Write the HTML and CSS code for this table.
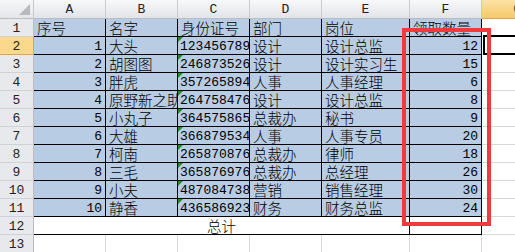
FILE: index.html
```html
<!DOCTYPE html>
<html lang="zh">
<head>
<meta charset="utf-8">
<title>Sheet</title>
<link rel="stylesheet" href="styles.css">
</head>
<body>
<div class="sheet">
  <div class="corner"></div>
  <div class="ch">A</div><div class="ch">B</div><div class="ch">C</div><div class="ch">D</div><div class="ch">E</div><div class="ch">F</div><div class="ch sel">G</div><div class="ch">H</div>

  <div class="rh">1</div>
  <div class="d">序号</div><div class="d">名字</div><div class="d">身份证号</div><div class="d">部门</div><div class="d">岗位</div><div class="d">领取数量</div><div class="c"></div><div class="c"></div>

  <div class="rh sel">2</div>
  <div class="d n">1</div><div class="d">大头</div><div class="d id">123456789012345678</div><div class="d">设计</div><div class="d">设计总监</div><div class="d n">12</div><div class="c cur"></div><div class="c"></div>

  <div class="rh">3</div>
  <div class="d n">2</div><div class="d">胡图图</div><div class="d id">246873526198712034</div><div class="d">设计</div><div class="d">设计实习生</div><div class="d n">15</div><div class="c"></div><div class="c"></div>

  <div class="rh">4</div>
  <div class="d n">3</div><div class="d">胖虎</div><div class="d id">357265894199203157</div><div class="d">人事</div><div class="d">人事经理</div><div class="d n">6</div><div class="c"></div><div class="c"></div>

  <div class="rh">5</div>
  <div class="d n">4</div><div class="d">原野新之助</div><div class="d id">264758476199506238</div><div class="d">设计</div><div class="d">设计总监</div><div class="d n">8</div><div class="c"></div><div class="c"></div>

  <div class="rh">6</div>
  <div class="d n">5</div><div class="d">小丸子</div><div class="d id">364575865199810425</div><div class="d">总裁办</div><div class="d">秘书</div><div class="d n">9</div><div class="c"></div><div class="c"></div>

  <div class="rh">7</div>
  <div class="d n">6</div><div class="d">大雄</div><div class="d id">366879534199107316</div><div class="d">人事</div><div class="d">人事专员</div><div class="d n">20</div><div class="c"></div><div class="c"></div>

  <div class="rh">8</div>
  <div class="d n">7</div><div class="d">柯南</div><div class="d id">265870876198904527</div><div class="d">总裁办</div><div class="d">律师</div><div class="d n">18</div><div class="c"></div><div class="c"></div>

  <div class="rh">9</div>
  <div class="d n">8</div><div class="d">三毛</div><div class="d id">365876976199302649</div><div class="d">总裁办</div><div class="d">总经理</div><div class="d n">26</div><div class="c"></div><div class="c"></div>

  <div class="rh">10</div>
  <div class="d n">9</div><div class="d">小夫</div><div class="d id">487084738199605812</div><div class="d">营销</div><div class="d">销售经理</div><div class="d n">30</div><div class="c"></div><div class="c"></div>

  <div class="rh">11</div>
  <div class="d n">10</div><div class="d">静香</div><div class="d id">436586923199708153</div><div class="d">财务</div><div class="d">财务总监</div><div class="d n">24</div><div class="c"></div><div class="c"></div>

  <div class="rh">12</div>
  <div class="tot">总计</div><div class="totf"></div><div class="c"></div><div class="c"></div>

  <div class="rh">13</div>
  <div class="c"></div><div class="c"></div><div class="c"></div><div class="c"></div><div class="c"></div><div class="c"></div><div class="c"></div><div class="c"></div>

  <div class="mark"></div>
</div>
</body>
</html>
```
FILE: styles.css
```css
* { box-sizing: border-box; }
html, body { margin: 0; padding: 0; background: #fff; }
body { width: 515px; height: 252px; overflow: hidden; }

.sheet {
  position: relative;
  display: grid;
  grid-template-columns: 34px 72px 72px 72px 72px 88px 72px 72px 72px;
  grid-template-rows: 19px repeat(13, 18px);
  width: 626px;
  font-family: "Noto Sans CJK SC", sans-serif;
  font-size: 14.5px;
  font-weight: 300;
  color: #000;
}

.sheet > div {
  overflow: hidden;
  white-space: nowrap;
  line-height: 18px;
}

.corner {
  position: relative;
  background: linear-gradient(#f6f7f9, #e4e6e9);
  border-right: 1px solid #c5c8cc;
  border-bottom: 1px solid #b9bcc0;
}
.corner::after {
  content: "";
  position: absolute;
  right: 3px;
  bottom: 3px;
  width: 0;
  height: 0;
  border-left: 11px solid transparent;
  border-bottom: 11px solid #b8babd;
}

.ch {
  background: linear-gradient(#f7f8fa, #e2e4e8);
  border-right: 1px solid #c8cbcf;
  border-bottom: 1px solid #b9bcc0;
  text-align: center;
  font-family: "Liberation Mono", monospace;
  font-size: 13px;
  font-weight: normal;
  line-height: 20px !important;
  color: #222;
}
.ch.sel {
  background: linear-gradient(#fbe3a6, #f5c96a);
  border-bottom: 1px solid #e6a540;
  border-right-color: #e6a540;
}

.rh {
  background: #e7e9ec;
  border-right: 1px solid #b9bcc0;
  border-bottom: 1px solid #cfd2d6;
  text-align: center;
  font-family: "Liberation Mono", monospace;
  font-size: 13px;
  font-weight: normal;
  line-height: 19px !important;
  color: #222;
}
.rh.sel {
  background: #fad98d;
  border-bottom-color: #e6a540;
  border-right-color: #e6a540;
}

.c {
  border-right: 1px solid #d8d8d8;
  border-bottom: 1px solid #d8d8d8;
}
.c.cur { position: relative; overflow: visible !important; }
.c.cur::after {
  content: "";
  position: absolute;
  top: -2px;
  left: 1px;
  right: -3px;
  bottom: -1px;
  border: 2px solid #000;
}

.d {
  background: #b8cce4;
  border-right: 1px solid #000;
  border-bottom: 1px solid #000;
  padding: 0 2px 0 3px;
}
.d.n {
  text-align: right;
  font-family: "Liberation Mono", monospace;
  font-size: 13px;
  font-weight: normal;
  line-height: 19px;
  padding-right: 3px;
}
.d.id {
  position: relative;
  font-family: "Liberation Mono", monospace;
  font-size: 13px;
  font-weight: normal;
  line-height: 19px;
  padding-left: 2px;
  text-overflow: clip;
}
.d.id::before {
  content: "";
  position: absolute;
  top: 0;
  left: 0;
  width: 0;
  height: 0;
  border-top: 5px solid #1e8f1e;
  border-right: 5px solid transparent;
}

.tot {
  grid-column: span 5;
  text-align: center;
  background: #fff;
  border-right: 1px solid #000;
  border-bottom: 1px solid #000;
}
.totf {
  background: #fff;
  border-right: 1px solid #000;
  border-bottom: 1px solid #000;
}

.mark {
  position: absolute;
  left: 402px;
  top: 28px;
  width: 89px;
  height: 198px;
  border: 4px solid #f23a3c;
  pointer-events: none;
}
```
